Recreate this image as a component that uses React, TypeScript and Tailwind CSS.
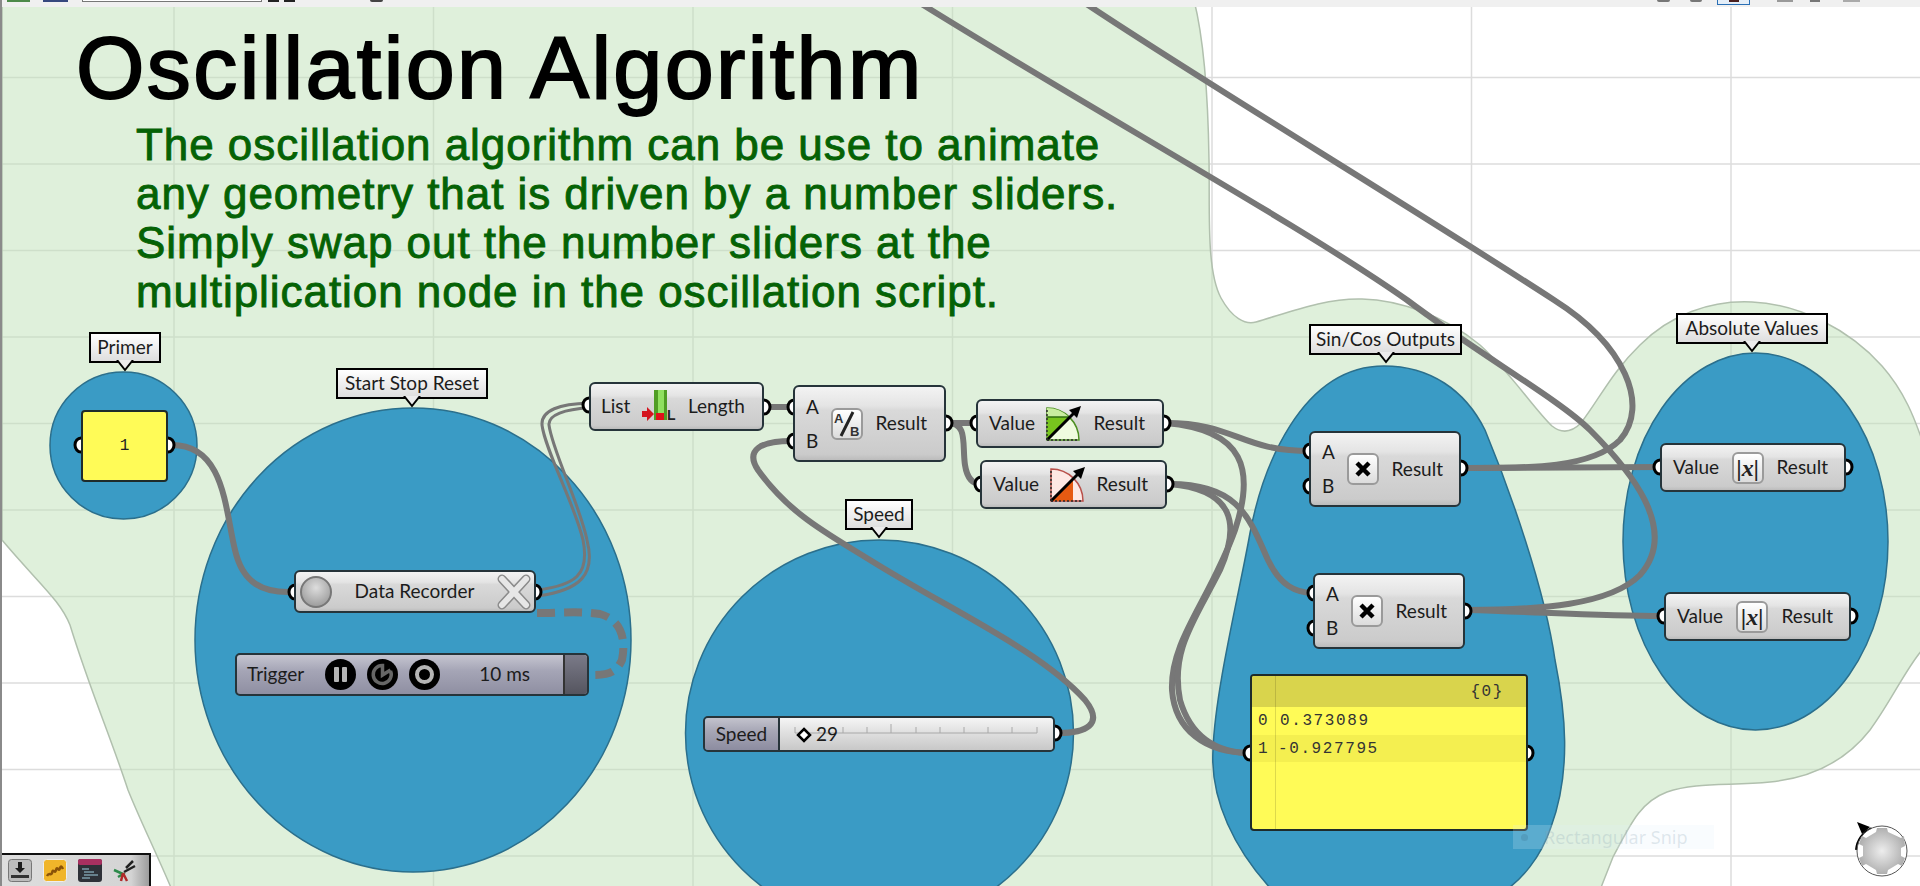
import React from "react";

const WIRE = "#777777";

function Port({ x, y }: { x: number; y: number }) {
  return <ellipse cx={x} cy={y} rx={6} ry={7} fill="#ffffff" stroke="#000000" strokeWidth={3} />;
}

const ports: [number, number][] = [
  [81, 445], [168, 445], [295, 592], [535, 592], [589, 405], [764, 407],
  [794, 407], [794, 441], [946, 423], [977, 423], [1164, 423], [981, 484], [1167, 484],
  [1310, 451], [1310, 486], [1461, 468], [1314, 593], [1314, 628], [1465, 611],
  [1660, 467], [1846, 467], [1664, 616], [1851, 616], [1250, 753], [1527, 753], [1055, 733],
];

function Canvas() {
  return (
    <svg className="absolute left-0 top-0" width={1920} height={886} viewBox="0 0 1920 886">
      <g stroke="#dcdcdc" strokeWidth={1.5}>
        {[77.5, 164, 250.5, 337, 423.5, 510, 596.5, 683, 769.5, 856].map((y) => (
          <line key={y} x1={0} x2={1920} y1={y} y2={y} />
        ))}
        {[174, 433.5, 693, 952.5, 1212, 1471.5, 1731].map((x) => (
          <line key={x} x1={x} x2={x} y1={0} y2={886} />
        ))}
      </g>
      <path
        d="M1194 0 C1204 40 1208 90 1209 160 C1210 210 1206 270 1221 298 C1232 318 1245 325 1256 322 C1290 312 1325 298 1362 299 C1400 300 1445 316 1480 345 C1510 372 1535 410 1552 426 C1562 434 1572 432 1581 423 C1600 398 1612 372 1640 345 C1670 315 1710 300 1752 302 C1800 304 1850 330 1882 366 C1905 392 1915 420 1922 440 L1922 650 C1905 670 1892 700 1870 730 C1845 762 1810 778 1770 782 C1730 786 1695 782 1667 792 C1640 802 1630 825 1613 857 L1600 890 L172 890 C155 850 140 820 128 790 C110 735 90 690 70 625 C60 600 40 585 2 540 L2 0 Z"
        fill="#bfe1b7"
        fillOpacity={0.5}
        stroke="#b1c0ae"
        strokeWidth={1.5}
      />
      <g fill="#3a9bc5" stroke="#2b6f8c" strokeWidth={1.5}>
        <ellipse cx={123.5} cy={445.5} rx={73.5} ry={73.5} />
        <ellipse cx={413} cy={640} rx={218} ry={232} />
        <ellipse cx={879.5} cy={733} rx={194} ry={193} />
        <path d="M1384 366 C1430 366 1465 390 1485 430 C1510 490 1545 590 1555 660 C1565 710 1572 770 1551 827 C1540 860 1520 880 1506 890 L1272 890 C1235 850 1210 800 1213 750 C1215 690 1240 590 1250 533 C1262 470 1300 366 1384 366 Z" />
        <ellipse cx={1755.5} cy={541.5} rx={132.5} ry={188.5} />
      </g>
      <g fill="none" stroke={WIRE} strokeLinecap="round">
        <g strokeWidth={6}>
          <path d="M172 445 C225 445 225 510 235 550 C243 585 265 592 288 592" />
          <path d="M764 407 L794 407" />
          <path d="M792 441 C760 441 745 450 758 470 C790 515 830 535 870 560 C950 610 1040 650 1085 700 C1105 725 1085 733 1058 733" />
          <path d="M946 423 L977 423" />
          <path d="M948 423 C968 423 962 445 965 465 C967 478 972 484 981 484" />
          <path d="M1166 423 C1235 423 1240 451 1310 451" />
          <path d="M1166 423 C1245 430 1255 470 1235 530 C1210 600 1170 640 1172 690 C1175 730 1205 753 1250 753" />
          <path d="M1170 484 C1240 484 1250 520 1268 560 C1280 585 1295 593 1314 593" />
          <path d="M1170 484 C1235 490 1240 525 1220 570 C1195 620 1170 650 1180 700 C1190 735 1215 753 1250 753" />
          <path d="M1464 468 C1520 468 1590 470 1620 440 C1650 405 1625 345 1554 300 C1400 200 1200 80 1085 3" />
          <path d="M1464 468 L1660 467" />
          <path d="M1467 610 C1540 610 1610 605 1640 575 C1680 530 1630 470 1590 430 C1560 400 1480 355 1407 300 C1300 225 1100 115 920 3" />
          <path d="M1467 610 C1540 612 1600 616 1664 616" />
        </g>
        <g strokeWidth={3}>
          <path d="M538 590 C575 585 590 575 583 540 C575 505 545 450 542 425 C541 410 560 404 589 403" />
          <path d="M538 596 C580 590 596 575 587 540 C580 505 552 450 549 425 C548 415 565 409 589 408" />
        </g>
        <path d="M537 613 C560 613 580 611 600 614 C622 620 626 640 622 660 C615 675 605 675 592 675" strokeWidth={8} strokeDasharray="18 9" strokeLinecap="butt" />
      </g>
      {ports.map(([x, y]) => (
        <Port key={`${x}-${y}`} x={x} y={y} />
      ))}
    </svg>
  );
}

const nodeBase =
  "absolute flex items-center rounded-[6px] border-2 border-[#26343a] bg-[linear-gradient(180deg,#f3f3f3_0%,#e4e4e4_26%,#d9d9d9_32%,#cbcbcb_92%,#bcbcbc_100%)] text-[19px] text-[#1c1c1c] [font-family:Lato,'Liberation_Sans',sans-serif]";

function Bubble({ className, text }: { className: string; text: string }) {
  return (
    <div className={`absolute flex items-center justify-center border-2 border-black bg-[linear-gradient(180deg,#ffffff,#dedede)] text-[19px] text-[#1c1c1c] [font-family:Lato,'Liberation_Sans',sans-serif] ${className}`}>
      {text}
      <svg className="absolute left-1/2 top-full -ml-[9px] -mt-[1px]" width={18} height={12} viewBox="0 0 18 12">
        <path d="M1 0 L9 10 L17 0" fill="#ececec" stroke="#000000" strokeWidth={2} />
      </svg>
    </div>
  );
}

function IconBox({ children }: { children: React.ReactNode }) {
  return (
    <div className="flex h-[32px] w-[32px] items-center justify-center rounded-[6px] border-2 border-[#9a9a9a] bg-[linear-gradient(180deg,#ffffff,#dcdcdc)]">
      {children}
    </div>
  );
}

function Times() {
  return (
    <svg width={18} height={18} viewBox="0 0 18 18">
      <path d="M3 3 L15 15 M15 3 L3 15" stroke="#000000" strokeWidth={4.5} />
    </svg>
  );
}

function Abs() {
  return (
    <IconBox>
      <span className="text-[24px] font-bold italic leading-none text-[#222] [font-family:'Liberation_Serif',serif]">|x|</span>
    </IconBox>
  );
}

function Fan({ green }: { green: boolean }) {
  const line = green ? "#4d8f22" : "#b9504a";
  const big = green ? "#effbdf" : "#fde8e4";
  return (
    <svg width={38} height={37} viewBox="0 0 38 37">
      <path d="M2 35 L2 3 A32 32 0 0 1 34 35 Z" fill={big} stroke={line} strokeWidth={1.5} />
      {green ? (
        <>
          <path d="M2 3 A32 32 0 0 1 24 12 L2 12 Z" fill="#c9eda0" />
          <path d="M2 35 L2 12 L24 12 Z" fill="#78c41e" />
          <path d="M2 12 L24 12" stroke="#2f6d10" strokeWidth={1.5} />
        </>
      ) : (
        <path d="M2 35 L24 13 L24 35 Z" fill="#e65a12" />
      )}
      <path d="M2 35 L30 7" stroke="#000000" strokeWidth={3} />
      <path d="M36 1 L24 5 L32 13 Z" fill="#000000" />
      <path d="M2 35 L34 35 M2 35 L2 3" stroke="#2a2a2a" strokeWidth={1.5} strokeDasharray="2 2" />
    </svg>
  );
}

function ListIcon() {
  return (
    <svg width={36} height={33} viewBox="0 0 36 33">
      <rect x={13} y={0} width={13} height={30} fill="#90e060" />
      <rect x={13} y={0} width={4} height={30} fill="#4f9d24" />
      <rect x={23} y={0} width={3} height={30} fill="#4f9d24" />
      <rect x={15} y={23} width={8} height={7} fill="#e0101a" />
      <path d="M1 21 H6 V17 L13 24 L6 31 V27 H1 Z" fill="#d4141f" />
      <text x={26} y={30} fontSize={14} fontWeight={700} fill="#222222" fontFamily="Liberation Sans, sans-serif">L</text>
    </svg>
  );
}

function Components() {
  return (
    <>
      <div className="absolute left-[81px] top-[410px] flex h-[72px] w-[87px] items-center justify-center rounded-[4px] border-2 border-[#1e2b2b] bg-[#fffb57] text-[16px] text-[#222] [font-family:'Liberation_Mono',monospace]">
        1
      </div>

      <div className={`${nodeBase} left-[294px] top-[570px] h-[43px] w-[242px] justify-between pl-[4px] pr-[3px]`}>
        <div className="h-[32px] w-[32px] rounded-full border-2 border-[#777] bg-[radial-gradient(circle_at_50%_35%,#dddddd,#8e8e8e)]" />
        <span>Data Recorder</span>
        <svg width={34} height={36} viewBox="0 0 34 36">
          <path d="M5 5 L29 31 M29 5 L5 31" stroke="#8a8a8a" strokeWidth={9} strokeLinecap="round" />
          <path d="M5 5 L29 31 M29 5 L5 31" stroke="#e6e6e6" strokeWidth={6} strokeLinecap="round" />
        </svg>
      </div>

      <div className="absolute left-[235px] top-[653px] flex h-[43px] w-[354px] items-center overflow-hidden rounded-[5px] border-2 border-[#26343a] bg-[linear-gradient(180deg,#c5c5d0,#a5a5b6_40%,#8f8fa2)] text-[19px] text-[#1c1c1c] [font-family:Lato,'Liberation_Sans',sans-serif]">
        <span className="ml-[10px] w-[80px]">Trigger</span>
        <div className="flex gap-[11px]">
          <svg width={31} height={31} viewBox="0 0 31 31">
            <circle cx={15.5} cy={15.5} r={15.5} fill="#000000" />
            <rect x={9} y={8} width={5} height={15} rx={1} fill="#b5b5b5" />
            <rect x={17} y={8} width={5} height={15} rx={1} fill="#b5b5b5" />
          </svg>
          <svg width={31} height={31} viewBox="0 0 31 31">
            <circle cx={15.5} cy={15.5} r={15.5} fill="#000000" />
            <path d="M23.5 12 A9 9 0 1 1 15.5 6.5 V16 L23.5 11" fill="none" stroke="#666666" strokeWidth={3.5} />
          </svg>
          <svg width={31} height={31} viewBox="0 0 31 31">
            <circle cx={15.5} cy={15.5} r={15.5} fill="#000000" />
            <circle cx={15.5} cy={15.5} r={7.5} fill="none" stroke="#b5b5b5" strokeWidth={4} />
          </svg>
        </div>
        <span className="ml-[39px] w-[86px]">10 ms</span>
        <div className="h-full w-[24px] border-l-2 border-[#333] bg-[linear-gradient(180deg,#7a7a88,#55555f)]" />
      </div>

      <div className={`${nodeBase} left-[589px] top-[382px] h-[49px] w-[175px] justify-between pl-[10px] pr-[17px]`}>
        <span>List</span>
        <ListIcon />
        <span>Length</span>
      </div>

      <div className={`${nodeBase} left-[793px] top-[385px] h-[77px] w-[153px] justify-between pl-[11px] pr-[17px]`}>
        <div className="flex flex-col gap-[12px] leading-[22px]">
          <span>A</span>
          <span>B</span>
        </div>
        <IconBox>
          <svg width={28} height={28} viewBox="0 0 28 28">
            <text x={1} y={13} fontSize={13} fontWeight={700} fill="#333333" fontFamily="Liberation Sans, sans-serif">A</text>
            <path d="M8 26 L20 2" stroke="#222222" strokeWidth={3} />
            <text x={17} y={26} fontSize={13} fontWeight={700} fill="#333333" fontFamily="Liberation Sans, sans-serif">B</text>
          </svg>
        </IconBox>
        <span>Result</span>
      </div>

      <div className={`${nodeBase} left-[976px] top-[399px] h-[49px] w-[188px] justify-between pl-[11px] pr-[17px]`}>
        <span>Value</span>
        <Fan green />
        <span>Result</span>
      </div>
      <div className={`${nodeBase} left-[980px] top-[460px] h-[49px] w-[187px] justify-between pl-[11px] pr-[17px]`}>
        <span>Value</span>
        <Fan green={false} />
        <span>Result</span>
      </div>

      <div className={`${nodeBase} left-[1309px] top-[431px] h-[76px] w-[152px] justify-between pl-[11px] pr-[16px]`}>
        <div className="flex flex-col gap-[12px] leading-[22px]">
          <span>A</span>
          <span>B</span>
        </div>
        <IconBox><Times /></IconBox>
        <span>Result</span>
      </div>
      <div className={`${nodeBase} left-[1313px] top-[573px] h-[76px] w-[152px] justify-between pl-[11px] pr-[16px]`}>
        <div className="flex flex-col gap-[12px] leading-[22px]">
          <span>A</span>
          <span>B</span>
        </div>
        <IconBox><Times /></IconBox>
        <span>Result</span>
      </div>

      <div className={`${nodeBase} left-[1660px] top-[443px] h-[49px] w-[186px] justify-between pl-[11px] pr-[16px]`}>
        <span>Value</span>
        <Abs />
        <span>Result</span>
      </div>
      <div className={`${nodeBase} left-[1664px] top-[592px] h-[49px] w-[187px] justify-between pl-[11px] pr-[16px]`}>
        <span>Value</span>
        <Abs />
        <span>Result</span>
      </div>

      <div className="absolute left-[703px] top-[716px] flex h-[36px] w-[352px] overflow-hidden rounded-[5px] border-2 border-[#26343a] text-[19px] leading-[26px] text-[#1c1c1c] [font-family:Lato,'Liberation_Sans',sans-serif]">
        <div className="flex w-[75px] items-center justify-center border-r-2 border-[#26343a] bg-[linear-gradient(180deg,#c3c3cd,#a7a7b6_40%,#8c8ca0)]">Speed</div>
        <div className="relative flex-1 bg-[linear-gradient(180deg,#f5f5f5,#e2e2e2_40%,#c8c8c8)]">
          <svg className="absolute left-0 top-0" width={275} height={32} viewBox="0 0 275 32">
            <path d="M15 15 H257" stroke="#a8a8a8" strokeWidth={1} />
            {[15, 39, 63, 87, 111, 136, 160, 184, 208, 232, 257].map((x) => (
              <line key={x} x1={x} x2={x} y1={x === 111 ? 6 : 9} y2={15} stroke="#a8a8a8" />
            ))}
            <path d="M24 11 L30 17 L24 23 L18 17 Z" fill="#ffffff" stroke="#000000" strokeWidth={2.5} />
          </svg>
          <span className="absolute left-[36px] top-[3px]">29</span>
        </div>
      </div>

      <div className="absolute left-[1250px] top-[674px] flex h-[157px] w-[278px] flex-col overflow-hidden rounded-[4px] border-2 border-[#1e2b2b] bg-[#fffb57] text-[16px] tracking-[1.6px] text-[#333] [font-family:'Liberation_Mono',monospace]">
        <div className="flex h-[31px] items-center justify-end bg-[#d9d44c] pr-[22px]">{"{0}"}</div>
        <div className="flex h-[28px] items-center">
          <span className="w-[28px] pl-[6px]">0</span>
          <span>0.373089</span>
        </div>
        <div className="flex h-[27px] items-center bg-[#f4ef50]">
          <span className="w-[26px] pl-[6px]">1</span>
          <span>-0.927795</span>
        </div>
        <div className="absolute bottom-0 left-[23px] top-0 w-px bg-[#00000022]" />
      </div>

      <Bubble className="left-[89px] top-[332px] h-[31px] w-[72px]" text="Primer" />
      <Bubble className="left-[336px] top-[368px] h-[31px] w-[152px]" text="Start Stop Reset" />
      <Bubble className="left-[845px] top-[499px] h-[31px] w-[68px]" text="Speed" />
      <Bubble className="left-[1309px] top-[324px] h-[31px] w-[153px]" text="Sin/Cos Outputs" />
      <Bubble className="left-[1676px] top-[313px] h-[31px] w-[152px]" text="Absolute Values" />
    </>
  );
}

function TopStrip() {
  return (
    <div className="absolute left-0 right-0 top-0 flex h-[7px] items-start overflow-hidden bg-[#f0f0f0]">
      <div className="ml-[7px] h-[2px] w-[23px] bg-[#4d8a4a]" />
      <div className="ml-[13px] h-[2px] w-[25px] bg-[#36487e]" />
      <div className="ml-[14px] h-[2px] w-[180px] border-b border-x border-[#777] bg-white" />
      <div className="ml-[6px] h-[2px] w-[11px] bg-[#222]" />
      <div className="ml-[5px] h-[2px] w-[11px] bg-[#222]" />
      <div className="ml-[75px] h-[2px] w-[13px] rounded-b-full bg-[#444]" />
      <div className="ml-[1274px] h-[2px] w-[13px] rounded-b-full bg-[#777]" />
      <div className="ml-[20px] h-[2px] w-[12px] rounded-b-full bg-[#777]" />
      <div className="ml-[15px] flex h-[5px] w-[33px] justify-center border-x border-b border-[#2a6fb5] bg-[#e4eef8]">
        <div className="h-[2px] w-[10px] bg-[#4a2020]" />
      </div>
      <div className="ml-[27px] h-[2px] w-[16px] bg-[#999]" />
      <div className="ml-[17px] h-[2px] w-[10px] bg-[#777]" />
      <div className="ml-[23px] h-[2px] w-[17px] bg-[#aaa]" />
    </div>
  );
}

function BottomBar() {
  return (
    <div className="absolute bottom-0 left-0 flex h-[33px] w-[151px] items-center gap-[11px] border-r-2 border-t-2 border-[#111] bg-[linear-gradient(90deg,#dedede_0%,#d4d4d4_88%,#9c9c9c_100%)] pl-[8px]">
      <svg width={24} height={23} viewBox="0 0 24 23">
        <rect x={0.5} y={0.5} width={23} height={22} rx={3} fill="#bcbcbc" stroke="#777777" />
        <path d="M10 3 H14 V9 H17 L12 14 L7 9 H10 Z" fill="#1c1c1c" />
        <path d="M3 16 H21 V19 H3 Z" fill="#333333" />
      </svg>
      <svg width={24} height={23} viewBox="0 0 24 23">
        <rect x={0.5} y={0.5} width={23} height={22} rx={3} fill="#f0b52a" stroke="#eeeeee" />
        <path d="M4 17 C6 13 8 17 9 14 C10 8 12 16 13 11 C14 6 16 14 17 9 C18 6 19 8 20 10" fill="none" stroke="#8a5208" strokeWidth={2.5} />
      </svg>
      <svg width={24} height={23} viewBox="0 0 24 23">
        <rect width={24} height={23} rx={3} fill="#2e3138" />
        <rect width={24} height={6} rx={2} fill="#a83060" />
        <path d="M4 10 H11 M6 13 H16 M6 16 H20 M4 19 H12" stroke="#9fd0e0" strokeWidth={1.2} />
      </svg>
      <svg width={24} height={23} viewBox="0 0 24 23">
        <path d="M13 9 L20 2 M11 13 L22 7" stroke="#222222" strokeWidth={2.5} />
        <path d="M1 11 L10 15 L5 18" fill="none" stroke="#2c8a4a" strokeWidth={2.5} />
        <path d="M10 14 L8 22 M10 14 L14 22" stroke="#b02a2a" strokeWidth={2.5} />
      </svg>
    </div>
  );
}

function Overlays() {
  return (
    <>
      <div className="absolute left-[1513px] top-[825px] flex h-[24px] w-[201px] items-center bg-[#dff0fa]/20 text-[18px] text-[#8aa4b4]/25 [font-family:'Noto_Sans',sans-serif]">
        <span className="ml-[8px] mr-[16px] h-[7px] w-[7px] rounded-full bg-[#3a6f8a]/25" />
        Rectangular Snip
      </div>
      <svg className="absolute left-[1850px] top-[818px]" width={62} height={62} viewBox="0 0 62 62">
        <path d="M7 32 A25 25 0 0 1 22 11" fill="none" stroke="#000000" strokeWidth={4} />
        <path d="M7 4 L20 9 L12 16 Z" fill="#000000" />
        <circle cx={32} cy={33} r={25} fill="#ffffff" stroke="#555555" strokeWidth={1} />
        <defs>
          <radialGradient id="navg">
            <stop offset="0%" stopColor="#ededed" />
            <stop offset="100%" stopColor="#b0b0b0" />
          </radialGradient>
        </defs>
        <path d="M27 10 L37 10 L38 14 L51 20 L54 18 L55 28 L51 30 L51 38 L55 40 L52 48 L48 46 L38 52 L37 56 L27 56 L26 52 L16 46 L12 48 L9 40 L13 38 L13 28 L9 26 L12 18 L16 20 L26 14 Z" fill="url(#navg)" />
      </svg>
    </>
  );
}

export default function App() {
  return (
    <div className="relative h-[886px] w-[1920px] overflow-hidden bg-white">
      <Canvas />
      <h1 className="absolute left-[76px] top-[18px] whitespace-nowrap text-[88px] font-normal leading-[100px] tracking-[2.4px] text-black [-webkit-text-stroke-width:2px] [-webkit-text-stroke-color:#000000] [font-family:'Liberation_Sans',sans-serif]">
        Oscillation Algorithm
      </h1>
      <div className="absolute left-[136px] top-[120px] whitespace-nowrap text-[44px] leading-[49px] tracking-[0.95px] text-[#056205] [-webkit-text-stroke-width:0.9px] [-webkit-text-stroke-color:#056205] [font-family:'Liberation_Sans',sans-serif]">
        <p>The oscillation algorithm can be use to animate</p>
        <p>any geometry that is driven by a number sliders.</p>
        <p>Simply swap out the number sliders at the</p>
        <p>multiplication node in the oscillation script.</p>
      </div>
      <Components />
      <Overlays />
      <TopStrip />
      <BottomBar />
      <div className="absolute bottom-0 left-0 top-0 w-[2px] bg-[#8a8a8a]" />
    </div>
  );
}
